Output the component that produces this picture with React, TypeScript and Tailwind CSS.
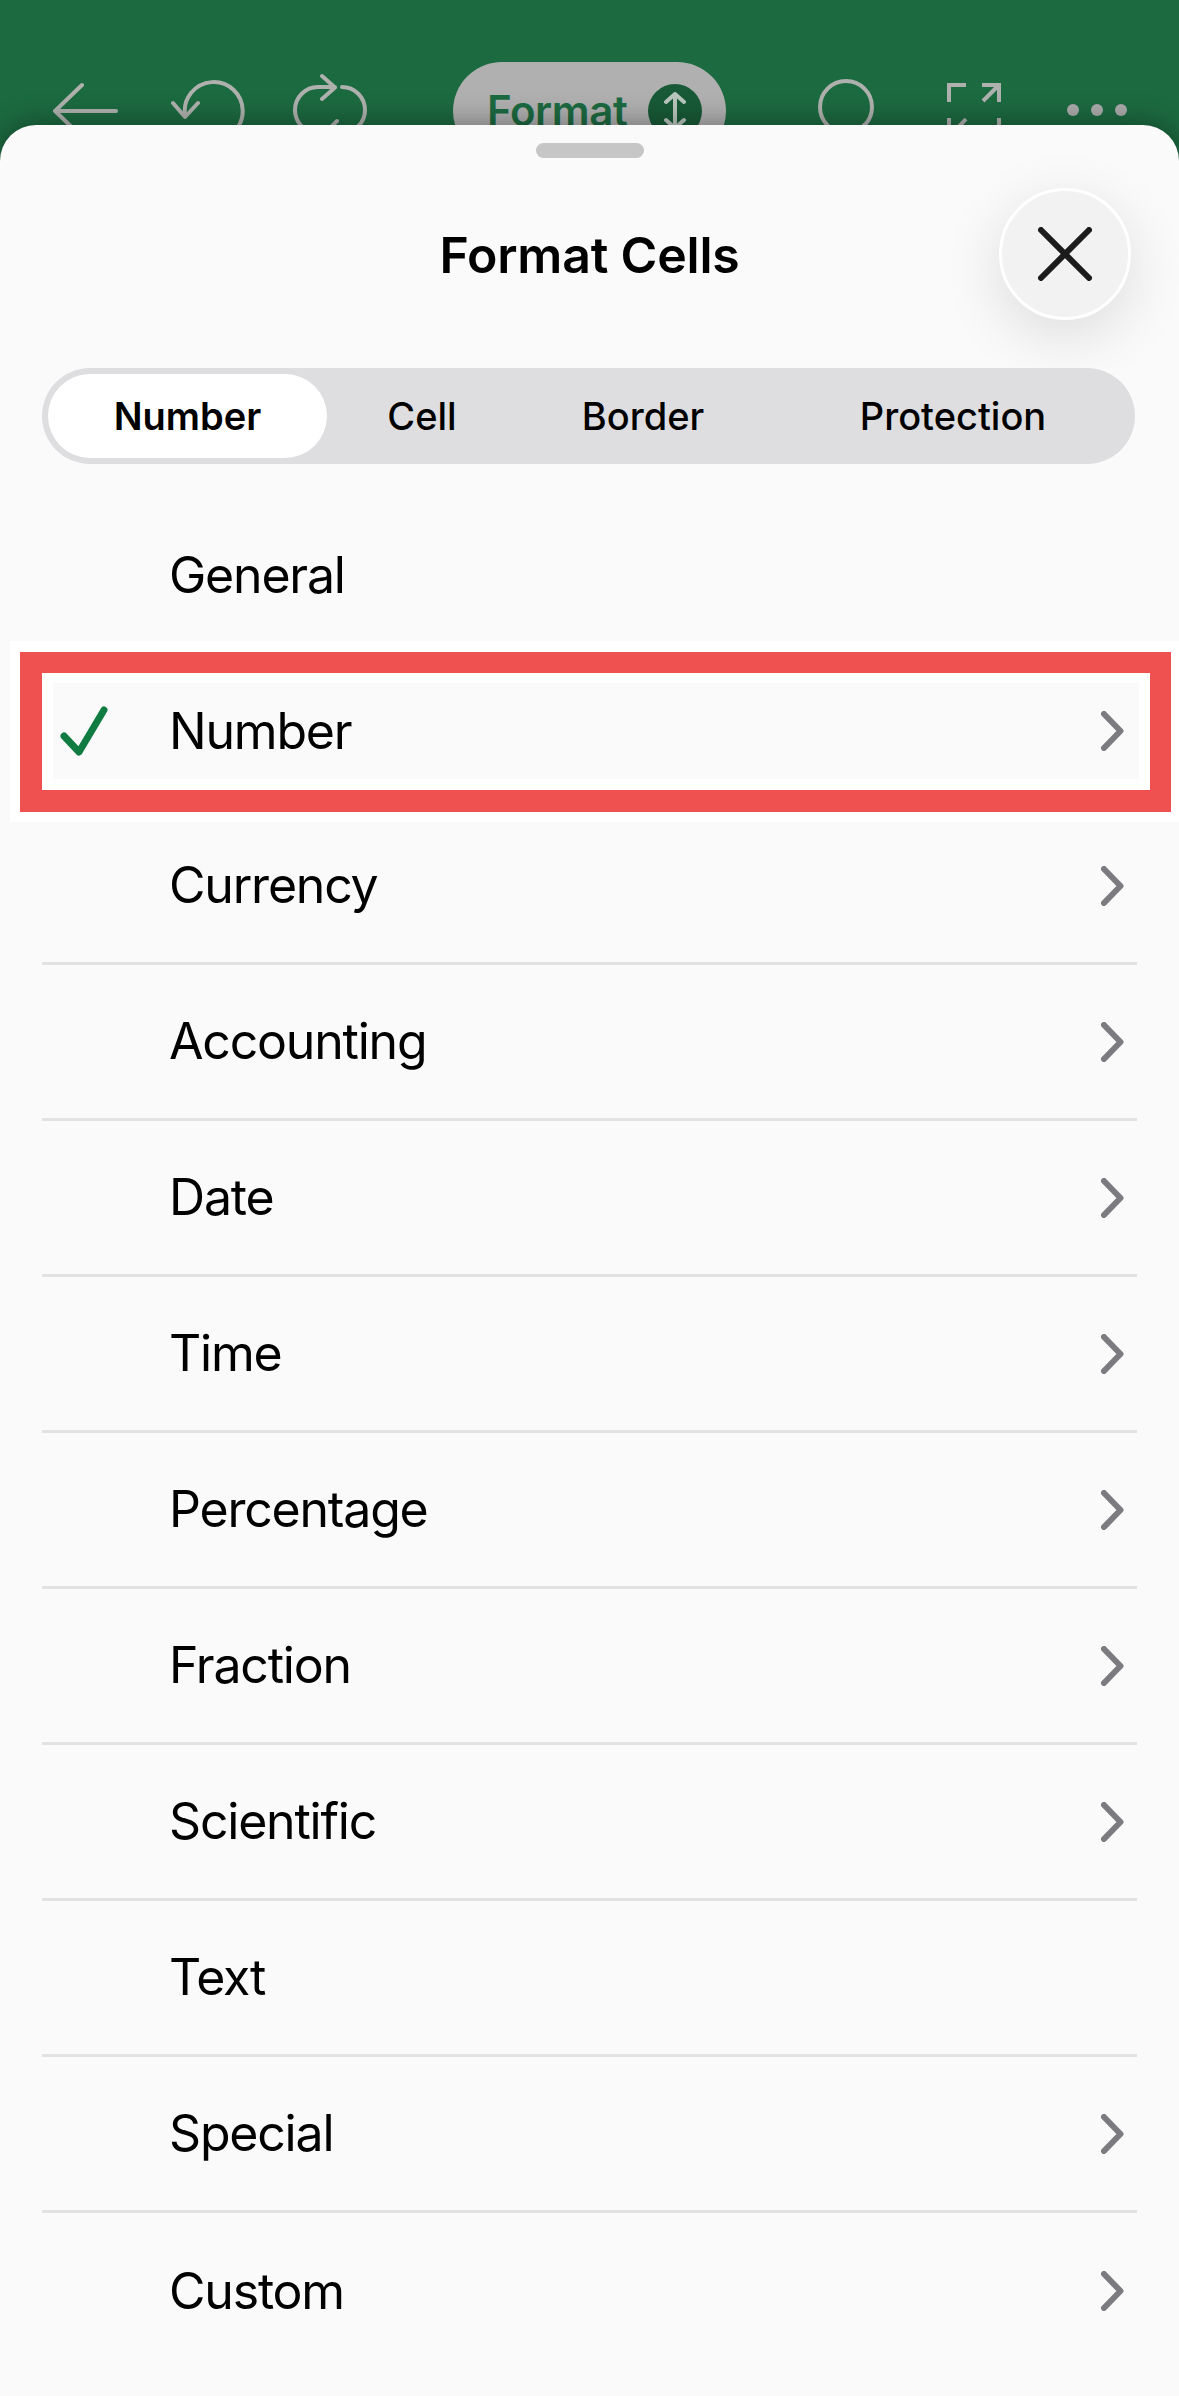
import React from "react";

const rows = [
  { label: "General", chevron: false },
  { label: "Number", chevron: true, selected: true },
  { label: "Currency", chevron: true },
  { label: "Accounting", chevron: true },
  { label: "Date", chevron: true },
  { label: "Time", chevron: true },
  { label: "Percentage", chevron: true },
  { label: "Fraction", chevron: true },
  { label: "Scientific", chevron: true },
  { label: "Text", chevron: false },
  { label: "Special", chevron: true },
  { label: "Custom", chevron: true },
];

const ToolbarIcons = () => (
  <div className="h-[125px] overflow-hidden bg-[#1c6a40] flex items-start pl-[50px]">
    {/* back */}
    <svg width="70" height="65" viewBox="0 0 70 65" fill="none" stroke="#aeb1ae" strokeWidth="4" strokeLinecap="round" strokeLinejoin="round" className="mt-[80px] shrink-0">
      <path d="M66 31H5M32 5L5 31L32 57" />
    </svg>
    {/* undo */}
    <svg width="75" height="67" viewBox="0 0 75 67" fill="none" stroke="#aeb1ae" strokeWidth="4" strokeLinecap="round" strokeLinejoin="round" className="mt-[78px] ml-[50px] shrink-0">
      <path d="M15 37A29 29 0 1 1 42 62M3 25L15 39L28 25" />
    </svg>
    {/* redo */}
    <svg width="80" height="75" viewBox="0 0 80 75" fill="none" stroke="#aeb1ae" strokeWidth="4" strokeLinecap="round" strokeLinejoin="round" className="mt-[70px] ml-[45px] shrink-0">
      <path d="M45 17H28A23 23 0 0 0 28 63H40M52 17A23 23 0 0 1 52 63M32 6L45 17.5L32 29M47 51L35 63" />
    </svg>
    {/* format pill */}
    <div className="mt-[62px] ml-[83px] w-[273px] h-[98px] shrink-0 rounded-[49px] bg-[#b0b0b0] flex items-center pl-[34px]">
      <span className="text-[42px] leading-none font-semibold tracking-[-0.4px] text-[#1c6a40]">Format</span>
      <span className="ml-[21px] w-[54px] h-[54px] rounded-full bg-[#185a37] flex items-center justify-center">
        <svg width="24" height="40" viewBox="0 0 24 40" fill="none" stroke="#b9c6bd" strokeWidth="4" strokeLinecap="round" strokeLinejoin="round">
          <path d="M12 3V37M3 11L12 3L21 11M3 29L12 37L21 29" />
        </svg>
      </span>
    </div>
    {/* search */}
    <svg width="65" height="62" viewBox="0 0 65 62" fill="none" stroke="#aeb1ae" strokeWidth="4" strokeLinecap="round" className="mt-[78px] ml-[90px] shrink-0">
      <circle cx="30" cy="29" r="26" />
      <path d="M48 47L60 59" />
    </svg>
    {/* expand */}
    <svg width="56" height="58" viewBox="0 0 56 58" fill="none" stroke="#aeb1ae" strokeWidth="4" strokeLinejoin="miter" className="mt-[82px] ml-[65px] shrink-0">
      <path d="M20 3H3V20M36 3H53V20M53 3L37 19M3 36V55M53 36V55M20 37L5 53" />
    </svg>
    {/* more */}
    <div className="mt-[104px] ml-[65px] flex gap-[12px] shrink-0">
      <span className="w-[12px] h-[12px] rounded-full bg-[#aaaaaa]" />
      <span className="w-[12px] h-[12px] rounded-full bg-[#aaaaaa]" />
      <span className="w-[12px] h-[12px] rounded-full bg-[#aaaaaa]" />
    </div>
  </div>
);

const Chevron = () => (
  <svg width="25" height="40" viewBox="0 0 25 40" fill="none" stroke="#7b7b80" strokeWidth="6" strokeLinecap="round" strokeLinejoin="round">
    <path d="M4 3L20.5 20L4 37" />
  </svg>
);

const Check = () => (
  <svg width="50" height="50" viewBox="0 0 50 50" fill="none" stroke="#107c41" strokeWidth="7" strokeLinecap="round" strokeLinejoin="round">
    <path d="M5 30L20 46L45 4" />
  </svg>
);

const App: React.FC = () => {
  return (
    <div className="w-[1179px] h-[2396px] overflow-hidden bg-[#1c6a40] font-[Inter,sans-serif] text-black">
      <ToolbarIcons />
      <div className="relative h-[2271px] bg-[#fafafa] rounded-t-[36px] shadow-[0_0_30px_rgba(0,0,0,0.4)]">
        <div className="flex justify-center pt-[18px]">
          <div className="w-[108px] h-[15px] rounded-full bg-[#c6c6c6]" />
        </div>
        {/* title row, the button shadow gets cut off at its top edge */}
        <div className="h-[210px] overflow-hidden grid grid-cols-[1fr_auto_1fr] pt-[30px]">
          <div />
          <h1 className="text-[50px] leading-[134px] font-semibold tracking-[-0.2px]">Format Cells</h1>
          <div className="flex justify-end pr-[48px]">
            <button className="w-[132px] h-[132px] rounded-full bg-[#f2f2f2] border-[3px] border-white shadow-[0_16px_60px_rgba(0,0,0,0.12)] flex items-center justify-center">
              <svg width="54" height="54" viewBox="0 0 54 54" fill="none" stroke="#1c1c1c" strokeWidth="6" strokeLinecap="round">
                <path d="M3 3L51 51M51 3L3 51" />
              </svg>
            </button>
          </div>
        </div>
        {/* tabs */}
        <div className="mx-[42px] w-[1093px] h-[96px] rounded-[48px] bg-[#dedee0] p-[6px] flex items-center text-[38px] font-medium">
          <div className="w-[279px] h-[84px] rounded-[42px] bg-white flex items-center justify-center font-semibold">Number</div>
          <div className="w-[190px] text-center">Cell</div>
          <div className="w-[252px] text-center">Border</div>
          <div className="flex-1 pl-[8px] text-center">Protection</div>
        </div>
        {/* list */}
        <div className="mt-[33px] ml-[42px] w-[1095px]">
          {rows.map((row, i) => (
            <div
              key={row.label}
              className={`relative h-[156px] flex items-center ${i > 1 && i < rows.length - 1 ? "border-b-[3px] border-[#e2e2e2]" : ""}`}
            >
              <div className="w-[127px] shrink-0 pl-[17px]">{row.selected && <Check />}</div>
              <span className="flex-1 text-[50px] tracking-[-1.2px]">{row.label}</span>
              {row.chevron && (
                <div className="mr-[12px] flex items-center">
                  <Chevron />
                </div>
              )}
              {row.selected && (
                <div className="absolute -left-[32px] -right-[42px] -top-[12px] -bottom-[13px] border-white border-t-[11px] border-l-[10px] border-r-[8px] border-b-[10px] pointer-events-none">
                  <div className="w-full h-full border-[#ef5050] border-t-[21px] border-l-[22px] border-r-[21px] border-b-[22px]">
                    <div className="w-full h-full border-white border-t-[10px] border-l-[11px] border-r-[11px] border-b-[11px]" />
                  </div>
                </div>
              )}
            </div>
          ))}
        </div>
      </div>
    </div>
  );
};

export default App;
